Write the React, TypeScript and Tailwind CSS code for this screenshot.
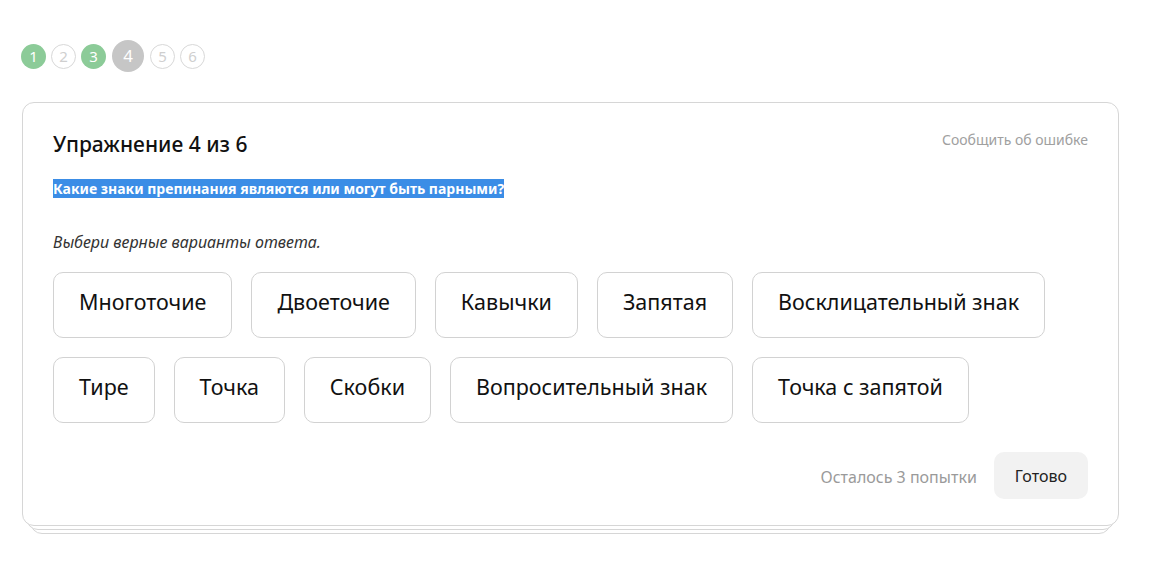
import React from "react";

const steps = [
  { n: 1, state: "done" },
  { n: 2, state: "todo" },
  { n: 3, state: "done" },
  { n: 4, state: "current" },
  { n: 5, state: "todo" },
  { n: 6, state: "todo" },
];

const row1 = ["Многоточие", "Двоеточие", "Кавычки", "Запятая", "Восклицательный знак"];
const row2 = ["Тире", "Точка", "Скобки", "Вопросительный знак", "Точка с запятой"];

function Step({ n, state }: { n: number; state: string }) {
  if (state === "current") {
    return (
      <div className="mx-[1px] flex h-[32px] w-[32px] items-center justify-center rounded-full bg-[#c6c6c6] text-[17px] text-white">
        {n}
      </div>
    );
  }
  if (state === "done") {
    return (
      <div className="flex h-[25px] w-[25px] items-center justify-center rounded-full bg-[#8ccb98] text-[15px] text-white">
        {n}
      </div>
    );
  }
  return (
    <div className="flex h-[25px] w-[25px] items-center justify-center rounded-full border border-[#d8d8d8] text-[15px] text-[#cfcfcf]">
      {n}
    </div>
  );
}

function Chip({ label }: { label: string }) {
  return (
    <button
      type="button"
      className="h-[66px] rounded-[10px] border border-[#d2d2d2] bg-white px-[25px] pb-[5px] text-[21.5px] text-[#111]"
    >
      {label}
    </button>
  );
}

export default function App() {
  return (
    <div
      className="min-h-[565px] bg-white pl-[21px] pr-[52px] pt-[40px]"
      style={{ fontFamily: '"Noto Sans", "Open Sans", sans-serif' }}
    >
      <div className="flex h-[32px] items-center gap-[5px]">
        {steps.map((s) => (
          <Step key={s.n} n={s.n} state={s.state} />
        ))}
      </div>

      <div className="relative mt-[30px] ml-[1px]">
        <div className="absolute inset-x-[8px] bottom-[-8px] h-[40px] rounded-[12px] border border-[#d6d6d6] bg-white" />
        <div className="absolute inset-x-[4px] bottom-[-4px] h-[40px] rounded-[12px] border border-[#d6d6d6] bg-white" />
        <div className="relative rounded-[12px] border border-[#d6d6d6] bg-white px-[30px] pb-[26px] pt-[26px]">
          <div className="flex items-start justify-between">
            <h2 className="text-[21px] font-medium leading-[30px] text-[#111]">Упражнение 4 из 6</h2>
            <a className="pt-[1px] text-[14px] leading-[20px] text-[#a0a0a0]">Сообщить об ошибке</a>
          </div>

          <p className="mt-[19px] leading-[20px]">
            <span className="bg-[#3b8de6] text-[14px] font-bold text-white">
              Какие знаки препинания являются или могут быть парными?
            </span>
          </p>

          <p className="mt-[32px] text-[16px] italic leading-[22px] text-[#333]">
            Выбери верные варианты ответа.
          </p>

          <div className="mt-[19px] flex flex-col gap-[19px]">
            <div className="flex gap-[19px]">
              {row1.map((l) => (
                <Chip key={l} label={l} />
              ))}
            </div>
            <div className="flex gap-[19px]">
              {row2.map((l) => (
                <Chip key={l} label={l} />
              ))}
            </div>
          </div>

          <div className="mt-[29px] flex items-center justify-end gap-[17px]">
            <span className="pt-[3px] text-[16px] text-[#9a9a9a]">Осталось 3 попытки</span>
            <button
              type="button"
              className="h-[47px] rounded-[10px] bg-[#f2f2f2] px-[21px] text-[16px] text-[#222]"
            >
              Готово
            </button>
          </div>
        </div>
      </div>
    </div>
  );
}
